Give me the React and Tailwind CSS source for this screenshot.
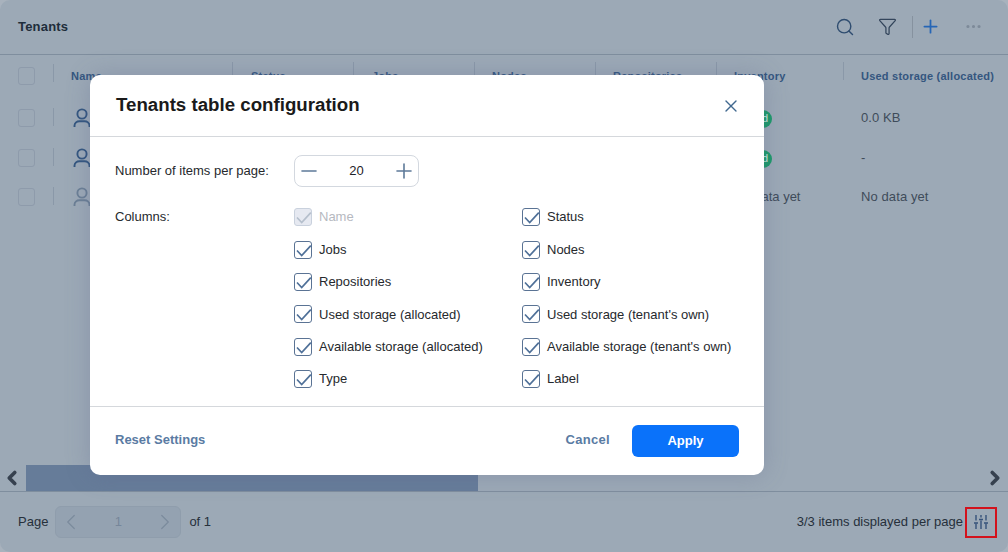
import React from 'react';
import { ChevronLeft, ChevronRight, Minus, Plus, Search, X, Funnel, Ellipsis } from 'lucide-react';

const tableCols = [
  { label: 'Name', width: 'w-[179px]', pad: 'pl-[17px]' },
  { label: 'Status', width: 'w-[121px]', pad: 'pl-[18px]' },
  { label: 'Jobs', width: 'w-[121px]', pad: 'pl-[18px]' },
  { label: 'Nodes', width: 'w-[121px]', pad: 'pl-[17px]' },
  { label: 'Repositories', width: 'w-[121px]', pad: 'pl-[17px]' },
  { label: 'Inventory', width: 'w-[127px]', pad: 'pl-[17px]' },
  { label: 'Used storage (allocated)', width: 'w-[165px]', pad: 'pl-[17px]' },
];

const rows = [
  { icon: 'text-[#33567f]', inventory: 'good', used: '0.0 KB', top: 'mt-[12px]' },
  { icon: 'text-[#33567f]', inventory: 'good', used: '-', top: 'mt-[20px]' },
  { icon: 'text-[#6b7f95]', inventory: 'No data yet', used: 'No data yet', top: 'mt-[19px]' },
];

const columnOptions = [
  ['Name', 'Status'],
  ['Jobs', 'Nodes'],
  ['Repositories', 'Inventory'],
  ['Used storage (allocated)', "Used storage (tenant's own)"],
  ['Available storage (allocated)', "Available storage (tenant's own)"],
  ['Type', 'Label'],
];

function UserIcon({ className }) {
  return (
    <svg width="18" height="20" viewBox="0 0 18 20" fill="none" stroke="currentColor" strokeWidth="1.9" className={className}>
      <circle cx="9" cy="6" r="4.6" />
      <path d="M1.5 19v-1.2c0-3 2.4-4.6 5-4.6h5c2.6 0 5 1.6 5 4.6V19" />
    </svg>
  );
}

function SlidersIcon() {
  return (
    <svg width="14" height="14" viewBox="0 0 14 14" fill="none" stroke="#35527a" strokeWidth="1.4">
      <path d="M2 0v5.5M2 8.5V14M7 0v2.5M7 5.5V14M12 0v5.5M12 8.5V14" />
      <path d="M0 8h4M5 4.5h4M10 8h4" strokeWidth="1.6" />
    </svg>
  );
}

function TableBox() {
  return <div className="w-[17px] h-[18px] rounded-[3px] border border-[#8e9bab]" />;
}

function Check({ label, disabled }) {
  return (
    <div className="flex items-center h-[32.4px]">
      <div className={`relative w-[18px] h-[18px] rounded-[3px] border ${disabled ? 'border-[#c9d1dd] bg-[#e6e9f1]' : 'border-[#5a7394] bg-white'}`}>
        <svg width="18" height="18" viewBox="0 0 18 18" fill="none" strokeWidth="1.7" className={`absolute -left-px -top-px ${disabled ? 'stroke-[#b5bfcc]' : 'stroke-[#4f7098]'}`}>
          <path d="M3 9.5l4.7 5L16.8 4.6" />
        </svg>
      </div>
      <span className={`ml-[7px] text-[13px] ${disabled ? 'text-[#b6b9bf]' : 'text-[#26292d]'}`}>{label}</span>
    </div>
  );
}

export default function App() {
  return (
    <div className="relative w-[1008px] h-[552px] overflow-hidden bg-[#a8b2bd] font-['Liberation_Sans',Arial,sans-serif]">
      <div className="flex flex-col h-full bg-[#9ca9b6] rounded-[10px] overflow-hidden">
        {/* Title bar */}
        <div className="flex items-center h-[55px] shrink-0 border-b border-[#7f8e9e] pl-[18px]">
          <span className="text-[13px] font-bold tracking-[0.2px] text-[#1e2d3b] -mt-[1px]">Tenants</span>
          <div className="ml-auto flex items-center text-[#2f4d70] -mt-[1px]">
            <Search size={20} strokeWidth={1.7} className="mt-[1px]" />
            <Funnel size={19} strokeWidth={1.6} className="ml-[23px] text-[#34465c]" />
            <div className="ml-[15px] w-px h-[22px] bg-[#86929f]" />
            <Plus size={21} strokeWidth={2} className="ml-[7px] text-[#2666b6]" />
            <Ellipsis size={19} strokeWidth={2} className="ml-[23px] mr-[25px] text-[#7d8a99]" />
          </div>
        </div>

        {/* Table */}
        <div className="flex-1 min-h-0">
          <div className="flex items-center h-[41px]">
            <div className="flex items-center w-[54px] shrink-0 pl-[18px]">
              <TableBox />
              <div className="ml-[18px] w-px h-[18px] bg-[#8a98a8] -mt-[5px]" />
            </div>
            {tableCols.map((col, i) => (
              <div key={col.label} className={`relative flex items-center ${col.width} shrink-0 ${col.pad} pt-[1px] text-[11px] font-bold tracking-[0.22px] text-[#34567f]`}>
                {col.label}
                {i < tableCols.length - 1 && <div className="absolute right-0 -top-[5px] w-px h-[18px] bg-[#8a98a8]" />}
              </div>
            ))}
          </div>
          {rows.map((row, i) => (
            <div key={i} className={`flex items-center h-[20px] ${row.top}`}>
              <div className="flex items-center w-[54px] shrink-0 pl-[18px]">
                <TableBox />
                <div className="ml-[18px] w-px h-[18px] bg-[#8a98a8] -mt-[2px]" />
              </div>
              <div className="w-[179px] shrink-0 pl-[19px]"><UserIcon className={row.icon} /></div>
              <div className="w-[484px] shrink-0" />
              <div className="w-[127px] shrink-0 pl-[17px] text-[13px] text-[#3f4c5a]">
                {row.inventory === 'good' ? (
                  <span className="inline-flex items-center justify-end w-[38px] h-[18px] rounded-full bg-[#1a9a68] pr-[4px] text-[11px] text-[#cfe8dc]">d</span>
                ) : row.inventory}
              </div>
              <div className="pl-[17px] text-[13px] tracking-[0.1px] text-[#3f4c5a]">{row.used}</div>
            </div>
          ))}
        </div>

        {/* Horizontal scrollbar */}
        <div className="flex items-center h-[27px] shrink-0 border-b border-[#7f8e9e]">
          <div className="flex items-center justify-center w-[24px] mr-[2px]">
            <ChevronLeft size={22} strokeWidth={4} className="text-[#36414f]" />
          </div>
          <div className="w-[452px] h-full bg-[#667c99]" />
          <div className="ml-auto flex items-center justify-center w-[26px]">
            <ChevronRight size={22} strokeWidth={4} className="text-[#36414f]" />
          </div>
        </div>

        {/* Pager */}
        <div className="flex items-center h-[60px] shrink-0 pl-[18px] text-[13px] text-[#26303b]">
          <span>Page</span>
          <div className="ml-[7px] flex items-center justify-between w-[126px] h-[32px] rounded-[6px] bg-[#94a2b1] border border-[#8f9dac] px-[2px]">
            <ChevronLeft size={26} strokeWidth={1.2} className="text-[#7c8b9d]" />
            <span className="text-[#76869a]">1</span>
            <ChevronRight size={26} strokeWidth={1.2} className="text-[#7c8b9d]" />
          </div>
          <span className="ml-[8px]">of 1</span>
          <span className="ml-auto">3/3 items displayed per page</span>
          <div className="ml-[2px] mr-[11px] flex items-center justify-center w-[32px] h-[31px] border-2 border-[#d3121c]">
            <SlidersIcon />
          </div>
        </div>
      </div>

      {/* Dialog */}
      <div className="absolute left-[90px] top-[75px] flex flex-col w-[674px] h-[400px] rounded-[10px] bg-white shadow-[0_0_24px_rgba(90,100,140,0.3)]">
        <div className="flex items-center justify-between h-[62px] shrink-0 border-b border-[#d5d8dc] pl-[26px] pr-[23px]">
          <span className="text-[18.7px] font-bold text-[#1a1a1a]">Tenants table configuration</span>
          <X size={20} strokeWidth={1.6} className="text-[#41698f]" />
        </div>

        <div className="flex-1 min-h-0 pl-[25px]">
          <div className="flex items-center mt-[18px]">
            <span className="w-[179px] text-[13px] text-[#26292d]">Number of items per page:</span>
            <div className="flex items-center justify-between w-[125px] h-[32px] rounded-[8px] border border-[#d3d8df] px-[2px]">
              <Minus size={24} strokeWidth={1.6} className="text-[#5d7a99]" />
              <span className="text-[13px] text-[#1f2328]">20</span>
              <Plus size={24} strokeWidth={1.6} className="text-[#5d7a99]" />
            </div>
          </div>
          <div className="flex mt-[14px]">
            <span className="w-[179px] text-[13px] text-[#26292d] mt-[6px]">Columns:</span>
            <div className="grid grid-cols-[228px_1fr]">
              {columnOptions.map(([left, right]) => (
                <React.Fragment key={left}>
                  <Check label={left} disabled={left === 'Name'} />
                  <Check label={right} />
                </React.Fragment>
              ))}
            </div>
          </div>
        </div>

        <div className="flex items-center h-[69px] shrink-0 border-t border-[#d5d8dc] px-[25px] text-[13px] font-bold">
          <span className="text-[#5a7ba3] -mt-[2px]">Reset Settings</span>
          <span className="ml-auto text-[#5a7ba3] tracking-[0.3px] -mt-[2px]">Cancel</span>
          <button className="ml-[22px] w-[107px] h-[32px] rounded-[6px] bg-[#0a72fa] text-white">Apply</button>
        </div>
      </div>
    </div>
  );
}
